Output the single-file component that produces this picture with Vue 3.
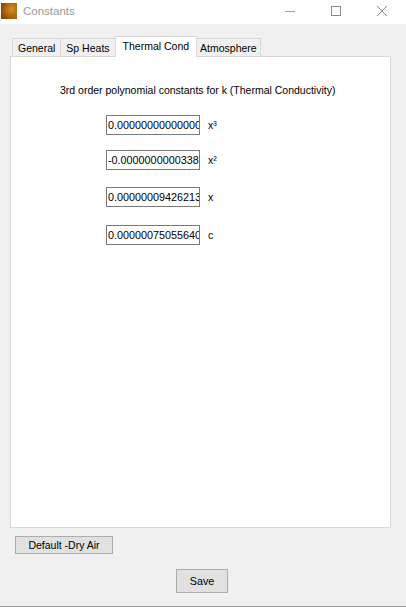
<template>
  <div class="window">
    <div class="titlebar">
      <div class="app-icon"></div>
      <span class="title">Constants</span>
      <div class="win-controls">
        <svg width="14" height="14" viewBox="0 0 14 14"><path d="M2 7.5h10" stroke="#a0a0a0" fill="none" /></svg>
        <svg width="14" height="14" viewBox="0 0 14 14"><rect x="2.5" y="2.5" width="9" height="9" stroke="#8c8c8c" fill="none" /></svg>
        <svg width="14" height="14" viewBox="0 0 14 14"><path d="M2 2l10 10M12 2L2 12" stroke="#8c8c8c" fill="none" /></svg>
      </div>
    </div>

    <div class="body">
      <div class="tabs">
        <div
          v-for="tab in tabs"
          :key="tab"
          class="tab"
          :class="{ active: tab === activeTab }"
        >{{ tab }}</div>
      </div>

      <div class="panel">
        <p class="panel-title">3rd order polynomial constants for k (Thermal Conductivity)</p>
        <div class="rows">
          <div v-for="row in rows" :key="row.label" class="row" :class="row.cls">
            <div class="field">{{ row.value }}</div>
            <span class="row-label">{{ row.label }}</span>
          </div>
        </div>
      </div>

      <div class="default-wrap">
        <button class="btn btn-default">Default -Dry Air</button>
      </div>
      <div class="save-wrap">
        <button class="btn btn-save">Save</button>
      </div>
    </div>
  </div>
</template>

<script setup>
const tabs = ['General', 'Sp Heats', 'Thermal Cond', 'Atmosphere']
const activeTab = 'Thermal Cond'

const rows = [
  { label: 'x³', value: '0.00000000000000', cls: 'row-a' },
  { label: 'x²', value: '-0.0000000000338', cls: 'row-b' },
  { label: 'x', value: '0.00000009426213', cls: 'row-c' },
  { label: 'c', value: '0.00000075055640', cls: 'row-d' }
]
</script>

<style>
html, body {
  margin: 0;
  background: #f0f0f0;
}
</style>

<style scoped>
.window {
  width: 406px;
  height: 607px;
  box-sizing: border-box;
  display: flex;
  flex-direction: column;
  background: #f0f0f0;
  border-bottom: 1px solid #9a9a9a;
  font-family: "Liberation Sans", Arial, sans-serif;
  font-size: 10.5px;
  color: #000;
  overflow: hidden;
}
.titlebar {
  height: 24px;
  flex-shrink: 0;
  background: #fff;
  display: flex;
  align-items: center;
  padding-left: 1px;
}
.app-icon {
  width: 16px;
  height: 16px;
  margin-top: -3px;
  background:
    radial-gradient(circle at 65% 40%, #d2941f 0%, rgba(190, 120, 20, 0.7) 40%, rgba(150, 80, 10, 0) 75%),
    linear-gradient(90deg, #8a4208, #a8620f);
}
.title {
  margin-left: 6px;
  margin-top: -3px;
  font-size: 11.5px;
  color: #9a9a9a;
}
.win-controls {
  margin-left: auto;
  margin-top: -3px;
  display: flex;
  gap: 32px;
  padding-right: 17px;
}
.body {
  flex: 1;
  padding: 13px 15px 0 10px;
  display: flex;
  flex-direction: column;
}
.tabs {
  display: flex;
  align-items: flex-end;
  height: 20px;
  padding-left: 2px;
  position: relative;
  z-index: 1;
  margin-bottom: -1px;
}
.tab {
  height: 18px;
  box-sizing: border-box;
  padding: 0 5px;
  line-height: 19px;
  border: 1px solid #d9d9d9;
  border-bottom: none;
  margin-left: -1px;
  margin-bottom: 1px;
  background: #f0f0f0;
  white-space: nowrap;
}
.tab:first-child {
  margin-left: 0;
}
.tab:last-child {
  padding: 0 3px;
}
.tab.active {
  height: 21px;
  line-height: 19px;
  padding: 0 7px;
  background: #fff;
  margin-bottom: 0;
}
.panel {
  height: 472px;
  box-sizing: border-box;
  background: #fff;
  border: 1px solid #d9d9d9;
}
.panel-title {
  margin: 26px 0 0 49px;
  line-height: 14px;
  white-space: nowrap;
}
.rows {
  margin: 18px 0 0 95px;
  display: flex;
  flex-direction: column;
}
.row {
  display: flex;
  align-items: center;
  height: 20px;
}
.row-b { margin-top: 15px; }
.row-c { margin-top: 17px; }
.row-d { margin-top: 18px; }
.field {
  width: 94px;
  height: 20px;
  box-sizing: border-box;
  border: 1px solid #7a7a7a;
  background: #fff;
  padding-left: 1px;
  font-size: 10.8px;
  line-height: 18px;
  white-space: nowrap;
  overflow: hidden;
}
.row-label {
  margin-left: 8px;
}
.btn {
  box-sizing: border-box;
  background: #e1e1e1;
  border: 1px solid #adadad;
  font: inherit;
  color: #000;
  padding: 0;
}
.default-wrap {
  margin: 8px 0 0 5px;
}
.btn-default {
  display: block;
  width: 98px;
  height: 18px;
}
.save-wrap {
  margin: 15px 0 0 166px;
}
.btn-save {
  display: block;
  width: 52px;
  height: 24px;
  font-size: 10.8px;
}
</style>
